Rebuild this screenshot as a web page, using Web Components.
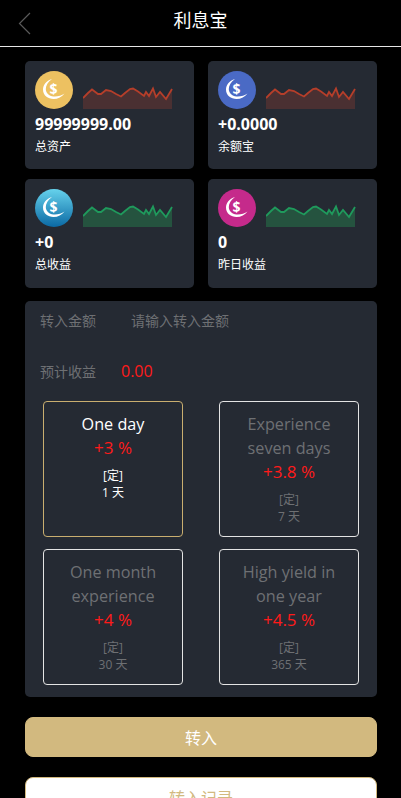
<!DOCTYPE html>
<html lang="zh">
<head>
<meta charset="utf-8">
<title>利息宝</title>
<style>
    html, body { margin: 0; padding: 0; background: #000; }
    body { font-family: "Open Sans", "Noto Sans CJK SC", sans-serif; scrollbar-width: none; }
    html { scrollbar-width: none; }
    main { display: block; padding: 14px 24px 30px 25px; }
</style>
</head>
<body>
<app-header>利息宝</app-header>
<main>
    <stat-grid>
        <stat-card value="99999999.00" label="总资产" icon="#edc161" trend="down"></stat-card>
        <stat-card value="+0.0000" label="余额宝" icon="#4a6ac5" trend="down"></stat-card>
        <stat-card value="+0" label="总收益" icon="sky" trend="up"></stat-card>
        <stat-card value="0" label="昨日收益" icon="#c52a8b" trend="up"></stat-card>
    </stat-grid>
    <deposit-panel>
        <plan-card active name="One day" rate="+3 %" days="1 天"></plan-card>
        <plan-card name="Experience seven days" rate="+3.8 %" days="7 天"></plan-card>
        <plan-card name="One month experience" rate="+4 %" days="30 天"></plan-card>
        <plan-card name="High yield in one year" rate="+4.5 %" days="365 天"></plan-card>
    </deposit-panel>
    <action-button primary>转入</action-button>
    <action-button>转入记录</action-button>
</main>

<script>
class AppHeader extends HTMLElement {
    constructor() {
        super();
        this.shadowDOM = this.attachShadow({mode: "open"});
    }
    connectedCallback() {
        this.shadowDOM.innerHTML = `
            <style>
                :host {
                    display: flex;
                    align-items: center;
                    justify-content: center;
                    position: relative;
                    height: 46px;
                    border-bottom: 1px solid #e6e6e6;
                    color: #fff;
                    font-size: 18px;
                }
                svg {
                    position: absolute;
                    left: 18px;
                    top: 12px;
                }
                span { margin-top: -8px; }
            </style>
            <svg width="13" height="23" viewBox="0 0 13 23" fill="none" stroke="#5a5a5a" stroke-width="1.2">
                <path d="M12 1 L1.5 11.5 L12 22"/>
            </svg>
            <span><slot></slot></span>`;
    }
}

class StatGrid extends HTMLElement {
    constructor() {
        super();
        this.attachShadow({mode: "open"}).innerHTML = `
            <style>
                :host {
                    display: grid;
                    grid-template-columns: 169px 169px;
                    grid-template-rows: 108px 109px;
                    column-gap: 14px;
                    row-gap: 10px;
                }
            </style>
            <slot></slot>`;
    }
}

const TREND = "0,12 5,7 9,3.5 15,8 18,8 23,4 28,5 33,8 38,10.5 42,7 47,3 50,2.5 55,5.5 61,10 63,6 66,10 70,2.5 73,11 77,6 83,13 89,3";

class StatCard extends HTMLElement {
    constructor() {
        super();
        this.shadowDOM = this.attachShadow({mode: "open"});
    }
    connectedCallback() {
        const up = this.getAttribute("trend") === "up";
        const line = up ? "#1f9a5c" : "#b53e2a";
        const fill = up ? "#25533f" : "#4a3032";
        const icon = this.getAttribute("icon");
        const bg = icon === "sky" ? "linear-gradient(#66d2ec, #0b69a4)" : icon;
        this.shadowDOM.innerHTML = `
            <style>
                :host {
                    display: block;
                    box-sizing: border-box;
                    padding: 10px 10px 0;
                    background: #252a33;
                    border-radius: 5px;
                    color: #fff;
                }
                .top {
                    display: flex;
                    gap: 10px;
                    align-items: flex-end;
                }
                .coin {
                    width: 38px;
                    height: 38px;
                    border-radius: 50%;
                    background: ${bg};
                }
                .coin svg { display: block; }
                .coin text {
                    font: 700 14px "Open Sans", sans-serif;
                    fill: #fff;
                }
                .chart { display: block; }
                .value {
                    font-size: 16px;
                    font-weight: 700;
                    line-height: 22px;
                    margin-top: 4px;
                }
                .label {
                    font-size: 12px;
                    line-height: 17px;
                    margin-top: 3px;
                }
            </style>
            <div class="top">
                <div class="coin">
                    <svg width="38" height="38" viewBox="0 0 38 38" fill="none">
                        <path d="M17 8 C11 10 8 14 8 18.5 C8 24.5 13 28 18.5 28 C23 28 27 26 29.5 22.5 C26.5 24.8 22.5 25.8 18.5 25.5 C14 25 10.8 22 10.8 18 C10.8 14.5 13 11 17 8 Z" fill="#fff"/>
                        <text x="18.5" y="23" text-anchor="middle">$</text>
                    </svg>
                </div>
                <svg class="chart" width="90" height="31" viewBox="0 0 90 31" fill="none">
                    <polygon points="${TREND} 89,23 0,23" transform="translate(0,8)" fill="${fill}"/>
                    <polyline points="${TREND}" transform="translate(0,8)" stroke="${line}" stroke-width="1.8"/>
                </svg>
            </div>
            <div class="value">${this.getAttribute("value")}</div>
            <div class="label">${this.getAttribute("label")}</div>`;
    }
}

class DepositPanel extends HTMLElement {
    constructor() {
        super();
        this.attachShadow({mode: "open"}).innerHTML = `
            <style>
                :host {
                    display: block;
                    margin-top: 13px;
                    padding: 9px 18px 12px 15px;
                    background: #252a33;
                    border-radius: 5px;
                    color: #6e7073;
                    font-size: 14px;
                }
                .row {
                    display: flex;
                    align-items: center;
                    height: 20px;
                }
                .row.income { margin-top: 31px; }
                .name { width: 91px; }
                .name.short { width: 82px; }
                .money { color: #ff1a1a; font-size: 16px; margin-left: -1px; }
                .plans {
                    display: grid;
                    grid-template-columns: 140px 140px;
                    column-gap: 36px;
                    row-gap: 12px;
                    margin: 20px 0 0 3px;
                }
            </style>
            <div class="row"><span class="name">转入金额</span><span>请输入转入金额</span></div>
            <div class="row income"><span class="name short">预计收益</span><span class="money">0.00</span></div>
            <div class="plans"><slot></slot></div>`;
    }
}

class PlanCard extends HTMLElement {
    constructor() {
        super();
        this.shadowDOM = this.attachShadow({mode: "open"});
    }
    connectedCallback() {
        this.shadowDOM.innerHTML = `
            <style>
                :host {
                    display: block;
                    box-sizing: border-box;
                    height: 136px;
                    padding: 10px 8px 0;
                    border: 1px solid #e4e4e4;
                    border-radius: 4px;
                    text-align: center;
                    color: #6e7073;
                }
                :host([active]) {
                    border-color: #c9ae6f;
                    color: #fff;
                }
                .name { font-size: 16.2px; line-height: 24px; }
                .rate { font-size: 17px; line-height: 24px; color: #ff1a1a; }
                .term { font-size: 12px; line-height: 17px; margin-top: 7px; }
            </style>
            <div class="name">${this.getAttribute("name")}</div>
            <div class="rate">${this.getAttribute("rate")}</div>
            <div class="term">[定]<br>${this.getAttribute("days")}</div>`;
    }
}

class ActionButton extends HTMLElement {
    constructor() {
        super();
        this.attachShadow({mode: "open"}).innerHTML = `
            <style>
                :host {
                    display: flex;
                    align-items: center;
                    justify-content: center;
                    box-sizing: border-box;
                    height: 40px;
                    margin-top: 20px;
                    border: 1px solid #d2b97f;
                    border-radius: 8px;
                    background: #fff;
                    color: #d2b97f;
                    font-size: 16px;
                }
                :host([primary]) {
                    background: #d2b97f;
                    color: #fff;
                }
            </style>
            <slot></slot>`;
    }
}

customElements.define("app-header", AppHeader);
customElements.define("stat-grid", StatGrid);
customElements.define("stat-card", StatCard);
customElements.define("deposit-panel", DepositPanel);
customElements.define("plan-card", PlanCard);
customElements.define("action-button", ActionButton);
</script>
</body>
</html>
